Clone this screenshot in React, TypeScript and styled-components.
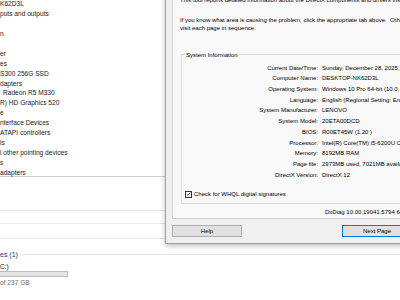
import { FunctionComponent } from "react";
import styled, { createGlobalStyle } from "styled-components";

const GlobalStyle = createGlobalStyle`
    html, body {
        margin: 0;
        padding: 0;
        background: #ffffff;
    }
    body {
        font-family: "Liberation Sans", Arial, sans-serif;
    }
`

const deviceRows = [
    { text: "K62D3L", indent: 0 },
    { text: "puts and outputs", indent: 0 },
    { text: "", indent: 0 },
    { text: "n", indent: 0 },
    { text: "", indent: 0 },
    { text: "er", indent: 0 },
    { text: "es", indent: 0 },
    { text: "S300 256G SSD", indent: 0 },
    { text: "dapters", indent: 0 },
    { text: "Radeon R5 M330", indent: 3 },
    { text: "R) HD Graphics 520", indent: 0 },
    { text: "e", indent: 0 },
    { text: "nterface Devices", indent: 0 },
    { text: "ATAPI controllers", indent: 0 },
    { text: "ls", indent: 0 },
    { text: "l other pointing devices", indent: 0 },
    { text: "s", indent: 0 },
    { text: "adapters", indent: 0 },
]

const sysInfo = [
    ["Current Date/Time:", "Sunday, December 28, 2025, 10:42:15 PM"],
    ["Computer Name:", "DESKTOP-NK62D3L"],
    ["Operating System:", "Windows 10 Pro 64-bit (10.0, Build 19045)"],
    ["Language:", "English (Regional Setting: English)"],
    ["System Manufacturer:", "LENOVO"],
    ["System Model:", "20ETA00DCD"],
    ["BIOS:", "R00ET45W (1.20 )"],
    ["Processor:", "Intel(R) Core(TM) i5-6200U CPU @ 2.30GHz (4 CPUs), ~2.4GHz"],
    ["Memory:", "8192MB RAM"],
    ["Page file:", "2973MB used, 7021MB available"],
    ["DirectX Version:", "DirectX 12"],
]

const App: FunctionComponent = () => {
    return (
        <>
            <GlobalStyle />
            <Desktop>
                <Explorer>
                    <DeviceList>
                        {deviceRows.map((row, i) => (
                            <DeviceRow key={i} $indent={row.indent}>{row.text}</DeviceRow>
                        ))}
                    </DeviceList>
                    <DetailRow $h={33} />
                    <DetailRow $h={12} />
                    <DetailRow $h={14} />
                    <DrivesHeader>
                        <span>es (1)</span>
                        <HeaderLine />
                    </DrivesHeader>
                    <DriveName>C:)</DriveName>
                    <UsageBar />
                    <DriveFree>of 237 GB</DriveFree>
                </Explorer>

                <Dialog>
                    <TabPage>
                        <Intro>This tool reports detailed information about the DirectX components and drivers installed on your system.</Intro>
                        <Intro $gap={12}>
                            If you know what area is causing the problem, click the appropriate tab above.&nbsp;&nbsp;Otherwise, you can use the "Next Page" button below to
                            <br />
                            visit each page in sequence.
                        </Intro>
                        <GroupBox>
                            <Legend>System Information</Legend>
                            <InfoGrid>
                                {sysInfo.map(([label, value]) => (
                                    <InfoRow key={label}>
                                        <InfoLabel>{label}</InfoLabel>
                                        <InfoValue>{value}</InfoValue>
                                    </InfoRow>
                                ))}
                            </InfoGrid>
                            <CheckRow>
                                <CheckBox>
                                    <svg width="6" height="6" viewBox="0 0 6 6">
                                        <path d="M0.8 3.1 L2.4 4.6 L5.2 1.2" fill="none" stroke="#222" strokeWidth="0.9" />
                                    </svg>
                                </CheckBox>
                                <span>Check for WHQL digital signatures</span>
                            </CheckRow>
                        </GroupBox>
                        <Version>DxDiag 10.00.19041.5794 64-bit Unicode&nbsp;&nbsp;Copyright © Microsoft. All rights reserved.</Version>
                    </TabPage>
                    <ButtonBar>
                        <Button>Help</Button>
                        <RightButtons>
                            <Button $focused>Next Page</Button>
                            <Button>Save All Information...</Button>
                            <Button>Exit</Button>
                        </RightButtons>
                    </ButtonBar>
                </Dialog>
            </Desktop>
        </>
    );
}

const Desktop = styled.div`
    position: relative;
    width: 400px;
    height: 300px;
    overflow: hidden;
    background: #ffffff;
`
const Explorer = styled.div`
    width: 400px;
    height: 300px;
    display: flex;
    flex-direction: column;
    color: #1a1a1a;
    font-size: 6.6px;
`
const DeviceList = styled.div`
    margin-top: -1px;
    height: 178px;
    border-bottom: 1px solid #cfcfcf;
    box-sizing: border-box;
`
const DeviceRow = styled.div<{ $indent: number }>`
    height: 9.95px;
    line-height: 9.95px;
    padding-left: ${p => p.$indent}px;
    white-space: nowrap;
`
const DetailRow = styled.div<{ $h: number }>`
    height: ${p => p.$h}px;
    border-bottom: 1px solid #e6e6e6;
`
const DrivesHeader = styled.div`
    margin-top: 10px;
    display: flex;
    align-items: center;
    gap: 5px;
    height: 10px;
    color: #1e3287;
    font-size: 7px;
`
const HeaderLine = styled.div`
    flex: 1;
    height: 1px;
    background: #e2e2e2;
`
const DriveName = styled.div`
    margin-top: 3px;
    height: 9px;
    line-height: 9px;
`
const UsageBar = styled.div`
    width: 68px;
    height: 6px;
    background: #e6e6e6;
    border: 1px solid #bcbcbc;
    border-left: none;
    box-sizing: border-box;
`
const DriveFree = styled.div`
    margin-top: 1px;
    line-height: 9px;
    color: #6d6d6d;
`
const Dialog = styled.div`
    position: absolute;
    left: 165px;
    top: -13px;
    width: 340px;
    background: #f0f0f0;
    border: 1px solid #a0a0a0;
    border-top: none;
    box-shadow: 0 2px 5px rgba(0, 0, 0, 0.25);
    padding: 0 6px 6px 6px;
    font-family: "Liberation Sans", Tahoma, sans-serif;
    font-size: 6px;
    color: #000000;
`
const TabPage = styled.div`
    background: #f9f9f9;
    border: 1px solid #d4d4d4;
    border-top: none;
    padding: 9px 7px 2px 7px;
    height: 232px;
    box-sizing: border-box;
`
const Intro = styled.div<{ $gap?: number }>`
    margin-top: ${p => p.$gap ?? 0}px;
    line-height: 8px;
    white-space: nowrap;
`
const GroupBox = styled.div`
    position: relative;
    margin: 22px 0 0 1px;
    border: 1px solid #dcdcdc;
    padding: 7.7px 0 5px 0;
    height: 150px;
    box-sizing: border-box;
`
const Legend = styled.span`
    position: absolute;
    left: 3px;
    top: -4px;
    padding: 0 1px;
    line-height: 8px;
    background: #f9f9f9;
`
const InfoGrid = styled.div`
    display: flex;
    flex-direction: column;
`
const InfoRow = styled.div`
    display: grid;
    grid-template-columns: 136px 1fr;
    column-gap: 4px;
    height: 10.7px;
    line-height: 10.7px;
    white-space: nowrap;
`
const InfoLabel = styled.span`
    text-align: right;
`
const InfoValue = styled.span``
const CheckRow = styled.div`
    margin: 10px 0 0 3px;
    display: flex;
    align-items: center;
    gap: 2px;
    height: 8px;
`
const CheckBox = styled.div`
    width: 7px;
    height: 7px;
    border: 1px solid #333333;
    background: #ffffff;
    box-sizing: border-box;
    display: flex;
    align-items: center;
    justify-content: center;
`
const Version = styled.div`
    margin: 4px 0 0 145px;
    line-height: 8px;
    white-space: nowrap;
`
const ButtonBar = styled.div`
    display: flex;
    margin-top: 6px;
`
const RightButtons = styled.div`
    display: flex;
    flex-shrink: 0;
    gap: 6px;
    margin-left: 100px;
`
const Button = styled.div<{ $focused?: boolean }>`
    flex-shrink: 0;
    width: 70px;
    height: 12px;
    box-sizing: border-box;
    background: #e1e1e1;
    border: 1px solid ${p => p.$focused ? "#0078d7" : "#adadad"};
    display: flex;
    align-items: center;
    justify-content: center;
    white-space: nowrap;
`

export default App;
